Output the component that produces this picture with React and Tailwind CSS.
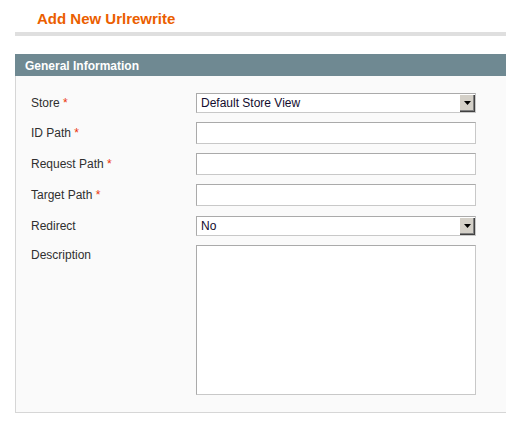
import React from "react";

function Arrow() {
  return (
    <div className="flex h-full w-[16px] items-center justify-center bg-[#d4d0c8] shadow-[inset_1px_1px_0_#fff,inset_-1px_-1px_0_#404040,inset_-2px_-2px_0_#808080]">
      <svg width="7" height="4" viewBox="0 0 7 4">
        <path d="M0 0H7L3.5 4Z" fill="#000" />
      </svg>
    </div>
  );
}

function Select({ value }) {
  return (
    <div className="flex h-[20px] w-[280px] items-stretch border border-t-[#aaa] border-l-[#aaa] border-r-[#c8c8c8] border-b-[#c8c8c8] bg-white">
      <div className="flex flex-1 items-center pl-[4px] text-[12px] text-[#120c2e]">{value}</div>
      <Arrow />
    </div>
  );
}

function Input({ h = "h-[22px]" }) {
  return (
    <div className={`${h} w-[280px] border border-t-[#aaa] border-l-[#aaa] border-r-[#c8c8c8] border-b-[#c8c8c8] bg-white`} />
  );
}

function Label({ text, req, pad = "" }) {
  return (
    <div className={`w-[165px] shrink-0 text-[12px] leading-[15px] text-[#2f2f2f] ${pad}`}>
      {text}
      {req && <span className="text-[#eb340a]"> *</span>}
    </div>
  );
}

export default function App() {
  return (
    <div className="h-[436px] w-[506px] overflow-hidden bg-white font-['Liberation_Sans',Arial,sans-serif]">
      <div className="pl-[37px] pt-[10px] text-[15px] font-bold leading-[18px] text-[#eb5e00]">
        Add New Urlrewrite
      </div>
      <div className="ml-[15px] mt-[4px] h-[4px] bg-[#dfdfdf]" />
      <div className="ml-[15px] mt-[18px]">
        <div className="flex h-[22px] items-center bg-[#6f8992] pl-[10px] pt-[1px] text-[12px] font-bold text-white">
          General Information
        </div>
        <div className="flex flex-col border-b border-l border-[#d6d6d6] bg-[#fafafa] pb-[17px] pl-[15px] pt-[17px]">
          <div className="flex items-center">
            <Label text="Store" req />
            <Select value="Default Store View" />
          </div>
          <div className="mt-[9px] flex items-center">
            <Label text="ID Path" req />
            <Input />
          </div>
          <div className="mt-[9px] flex items-center">
            <Label text="Request Path" req />
            <Input />
          </div>
          <div className="mt-[9px] flex items-center">
            <Label text="Target Path" req />
            <Input />
          </div>
          <div className="mt-[10px] flex items-center">
            <Label text="Redirect" />
            <Select value="No" />
          </div>
          <div className="mt-[9px] flex items-start">
            <Label text="Description" pad="pt-[3px]" />
            <Input h="h-[150px]" />
          </div>
        </div>
      </div>
    </div>
  );
}
